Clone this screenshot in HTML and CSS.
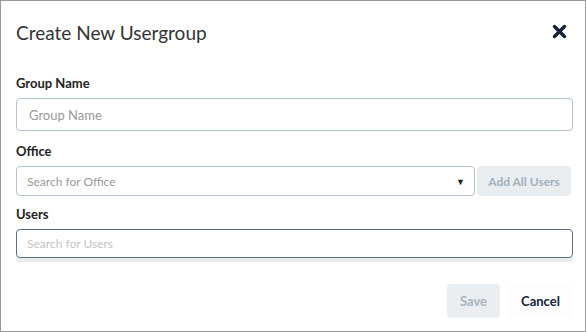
FILE: index.html
```html
<!DOCTYPE html>
<html lang="en">
<head>
<meta charset="UTF-8">
<title>Create New Usergroup</title>
<link rel="stylesheet" href="styles.css">
</head>
<body>
    <div class="modal">
        <div class="modal-header">
            <h2>Create New Usergroup</h2>
            <span class="close-btn">
                <svg width="15" height="15" viewBox="0 0 15 15">
                    <path d="M2.5 2.5 L12.5 12.5 M12.5 2.5 L2.5 12.5" stroke="#14233a" stroke-width="3.4" stroke-linecap="round"/>
                </svg>
            </span>
        </div>

        <div class="modal-body">
            <label class="field-label">Group Name</label>
            <input class="text-input" type="text" placeholder="Group Name">

            <label class="field-label">Office</label>
            <div class="office-row">
                <div class="select-box">
                    <span>Search for Office</span>
                    <span class="caret">&#9660;</span>
                </div>
                <button class="btn-add" disabled>Add All Users</button>
            </div>

            <label class="field-label users-label">Users</label>
            <div class="users-input">Search for Users</div>
        </div>

        <div class="modal-footer">
            <button class="btn-save" disabled>Save</button>
            <button class="btn-cancel">Cancel</button>
        </div>
    </div>
</body>
</html>
```

FILE: styles.css
```css
body {
    margin: 0;
    font-family: Lato, "Open Sans", sans-serif;
    background-color: #fff;
    color: #333;
}

.modal {
    box-sizing: border-box;
    width: 586px;
    height: 332px;
    border: 1px solid #9a9a9a;
    padding: 0 12px 0 15px;
    display: flex;
    flex-direction: column;
}

/* Header */
.modal-header {
    display: flex;
    justify-content: space-between;
    align-items: center;
    height: 62px;
}

.modal-header h2 {
    margin: 0;
    font-size: 19px;
    font-weight: 400;
    color: #333;
}

.close-btn {
    display: flex;
    margin-right: 6px;
    margin-top: -2px;
    cursor: pointer;
}

/* Body */
.modal-body {
    display: flex;
    flex-direction: column;
}

.field-label {
    font-size: 13px;
    font-weight: 700;
    color: #222;
    margin: 12px 0 7px;
}

.modal-body .users-label {
    margin-top: 10px;
}

.text-input {
    box-sizing: border-box;
    height: 33px;
    border: 1px solid #b4c0cc;
    border-radius: 4px;
    padding: 0 12px;
    font-family: inherit;
    font-size: 13px;
    color: #333;
    outline: none;
}

.text-input::placeholder {
    color: #999;
}

.office-row {
    display: flex;
    gap: 2px;
    height: 30px;
}

.select-box {
    flex: 1;
    box-sizing: border-box;
    display: flex;
    align-items: center;
    justify-content: space-between;
    border: 1px solid #b4c0cc;
    border-radius: 4px;
    padding: 0 9px 0 10px;
    font-size: 12px;
    color: #999;
}

.caret {
    font-size: 9px;
    color: #222;
}

.btn-add {
    width: 94px;
    margin-right: 2px;
    border: none;
    border-radius: 4px;
    background-color: #e9edf0;
    color: #a3afba;
    font-family: inherit;
    font-size: 12px;
    font-weight: 700;
}

.users-input {
    box-sizing: border-box;
    height: 29px;
    display: flex;
    align-items: center;
    border: 1px solid #5d6e80;
    border-radius: 4px;
    padding: 0 10px;
    font-size: 12px;
    color: #c4c4c4;
    box-shadow: 0 4px 0 #ebebeb;
}

/* Footer */
.modal-footer {
    display: flex;
    justify-content: flex-end;
    gap: 8px;
    margin-top: 26px;
}

.btn-save {
    width: 53px;
    height: 34px;
    border: none;
    border-radius: 4px;
    background-color: #ebeef1;
    color: #a8b3bd;
    font-family: inherit;
    font-size: 13px;
    font-weight: 700;
}

.btn-cancel {
    width: 65px;
    height: 34px;
    border: none;
    border-radius: 4px;
    background-color: #fdfdfd;
    color: #14233a;
    font-family: inherit;
    font-size: 13px;
    font-weight: 700;
}
```
